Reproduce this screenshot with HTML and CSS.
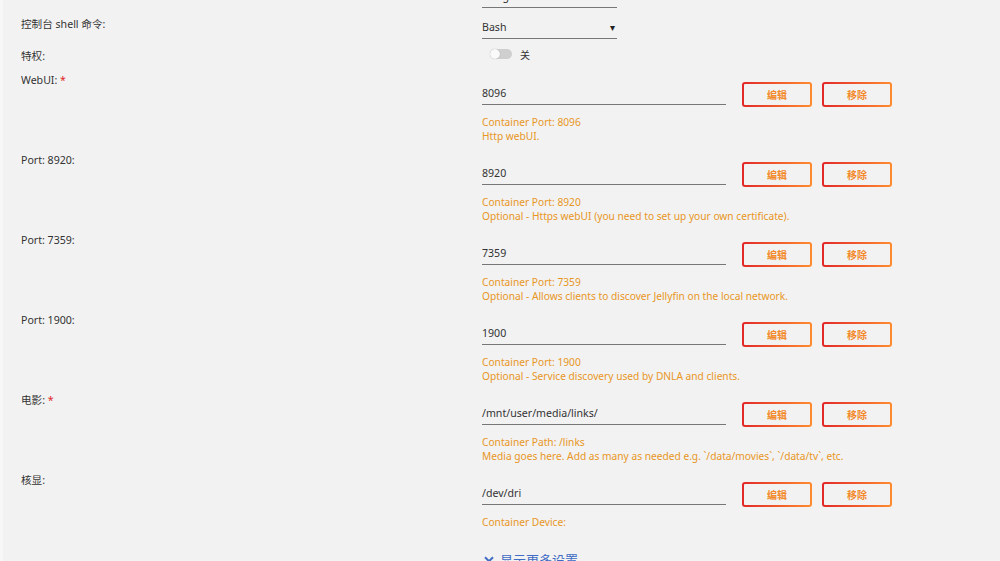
FILE: index.html
```html
<!DOCTYPE html>
<html lang="zh-CN">
<head>
  <meta charset="UTF-8" />
  <title>Docker 容器设置</title>
  <link rel="stylesheet" href="styles.css">
</head>
<body>
  <div class="page">
    <form class="settings">
      <div class="row row-cut">
        <div class="label"></div>
        <div class="field"><div class="select-box"><span>Bridge</span><span class="caret">▾</span></div></div>
      </div>

      <div class="row row-shell">
        <div class="label">控制台 shell 命令:</div>
        <div class="field"><div class="select-box"><span>Bash</span><span class="caret">▾</span></div></div>
      </div>

      <div class="row row-priv">
        <div class="label">特权:</div>
        <div class="field toggle-line"><span class="switch"><span class="knob"></span></span><span class="switch-text">关</span></div>
      </div>

      <div class="row">
        <div class="label">WebUI: <span class="req">*</span></div>
        <div class="field">
          <div class="input-line"><div class="input">8096</div><button type="button" class="btn">编辑</button><button type="button" class="btn">移除</button></div>
          <div class="desc">Container Port: 8096<br>Http webUI.</div>
        </div>
      </div>

      <div class="row">
        <div class="label">Port: 8920:</div>
        <div class="field">
          <div class="input-line"><div class="input">8920</div><button type="button" class="btn">编辑</button><button type="button" class="btn">移除</button></div>
          <div class="desc">Container Port: 8920<br>Optional - Https webUI (you need to set up your own certificate).</div>
        </div>
      </div>

      <div class="row">
        <div class="label">Port: 7359:</div>
        <div class="field">
          <div class="input-line"><div class="input">7359</div><button type="button" class="btn">编辑</button><button type="button" class="btn">移除</button></div>
          <div class="desc">Container Port: 7359<br>Optional - Allows clients to discover Jellyfin on the local network.</div>
        </div>
      </div>

      <div class="row">
        <div class="label">Port: 1900:</div>
        <div class="field">
          <div class="input-line"><div class="input">1900</div><button type="button" class="btn">编辑</button><button type="button" class="btn">移除</button></div>
          <div class="desc">Container Port: 1900<br>Optional - Service discovery used by DNLA and clients.</div>
        </div>
      </div>

      <div class="row">
        <div class="label">电影: <span class="req">*</span></div>
        <div class="field">
          <div class="input-line"><div class="input">/mnt/user/media/links/</div><button type="button" class="btn">编辑</button><button type="button" class="btn">移除</button></div>
          <div class="desc">Container Path: /links<br>Media goes here. Add as many as needed e.g. `/data/movies`, `/data/tv`, etc.</div>
        </div>
      </div>

      <div class="row">
        <div class="label">核显:</div>
        <div class="field">
          <div class="input-line"><div class="input">/dev/dri</div><button type="button" class="btn">编辑</button><button type="button" class="btn">移除</button></div>
          <div class="desc">Container Device:</div>
        </div>
      </div>

      <div class="row row-more">
        <div class="label"></div>
        <div class="field"><a class="more-link" href="#"><svg width="10" height="7" viewBox="0 0 10 7"><path d="M1 1.2 L5 5.2 L9 1.2" fill="none" stroke="#3f6cc4" stroke-width="2"/></svg>显示更多设置</a></div>
      </div>
    </form>
  </div>
</body>
</html>
```

FILE: styles.css
```css
body {
  margin: 0;
  background: #f2f2f2;
  font-family: "Noto Sans", "Noto Sans CJK SC", sans-serif;
  font-size: 10.6px;
  color: #333;
  overflow: hidden;
}
.page {
  border-left: 3px solid #f7f7f7;
  height: 561px;
  overflow: hidden;
}
.settings {
  padding-left: 18px;
  margin-top: -24px;
}
.row {
  display: grid;
  grid-template-columns: 461px 1fr;
  margin-bottom: 10px;
}
.label {
  line-height: 14px;
  color: #333;
}
.req {
  color: #e22828;
}
.field {
  padding-top: 9px;
}
.select-box {
  width: 135px;
  height: 22px;
  border-bottom: 1px solid #777;
  display: flex;
  justify-content: space-between;
  align-items: center;
  color: #333;
}
.caret {
  font-size: 10px;
  color: #222;
  padding-right: 2px;
}
.row-cut {
  margin-bottom: 0;
}
.row-shell {
  margin-top: 9px;
  margin-bottom: 0;
}
.row-shell .field {
  padding-top: 0;
  margin-top: -1px;
}
.row-priv {
  margin-top: 10px;
  margin-bottom: 10px;
}
.toggle-line {
  padding-top: 0;
  display: flex;
  align-items: center;
  gap: 8px;
  padding-left: 8px;
  height: 12px;
  margin-top: -1px;
}
.switch {
  width: 22px;
  height: 10px;
  border-radius: 5px;
  background: #cfcfcf;
  display: flex;
  align-items: center;
}
.knob {
  width: 10px;
  height: 10px;
  border-radius: 50%;
  background: #fafafa;
  box-shadow: 0 0 1px rgba(0, 0, 0, 0.3);
}
.switch-text {
  font-size: 10px;
  color: #333;
}
.input-line {
  display: flex;
  align-items: flex-start;
  gap: 10px;
  height: 25px;
}
.input {
  width: 244px;
  height: 22px;
  line-height: 22px;
  border-bottom: 1px solid #777;
  color: #333;
  margin-right: 6px;
}
.btn {
  width: 70px;
  height: 25px;
  padding: 0;
  border: 2px solid transparent;
  border-radius: 3px;
  background: linear-gradient(#f2f2f2, #f2f2f2) padding-box, linear-gradient(90deg, #e22828, #ff8c2f) border-box;
  color: #f28a2a;
  font-family: "Noto Sans CJK SC", sans-serif;
  font-size: 10px;
  font-weight: bold;
  cursor: pointer;
}
.desc {
  margin-top: 8px;
  line-height: 14px;
  font-size: 10.2px;
  color: #e8961e;
}
.row-more .field {
  padding-top: 11px;
}
.more-link {
  display: inline-flex;
  align-items: center;
  gap: 6px;
  padding-left: 2px;
  color: #3f6cc4;
  font-size: 13px;
  text-decoration: none;
}
```
